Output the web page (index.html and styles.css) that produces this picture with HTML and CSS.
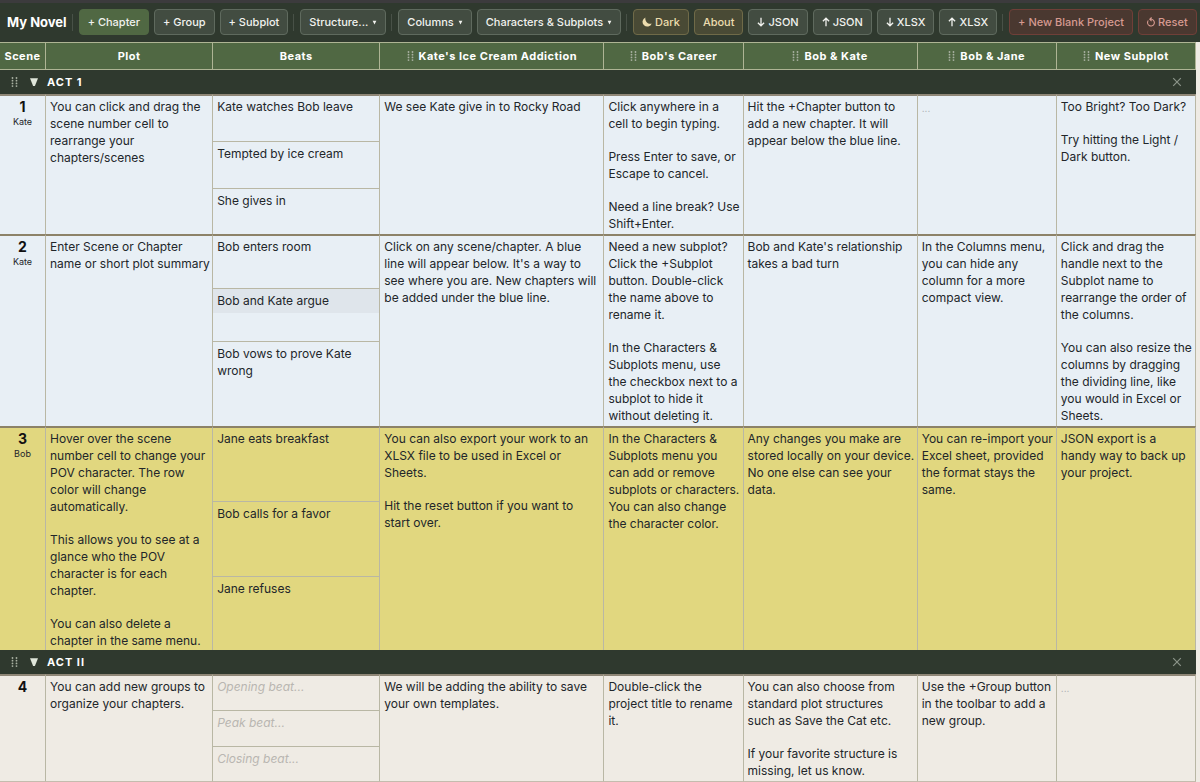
FILE: index.html
```html
<!DOCTYPE html>
<html lang="en">
  <head>
    <meta charset="UTF-8">
    <title>My Novel</title>
    <meta name="viewport" content="width=device-width, initial-scale=1.0">
    <link rel="stylesheet" href="styles.css">
  </head>
  <body>
    <!-- Shared icons -->
    <svg class="defs" width="0" height="0" aria-hidden="true">
      <symbol id="grip" viewBox="0 0 7 10">
        <circle cx="1.5" cy="1" r="0.9"/><circle cx="5.5" cy="1" r="0.9"/>
        <circle cx="1.5" cy="3.7" r="0.9"/><circle cx="5.5" cy="3.7" r="0.9"/>
        <circle cx="1.5" cy="6.4" r="0.9"/><circle cx="5.5" cy="6.4" r="0.9"/>
        <circle cx="1.5" cy="9.1" r="0.9"/><circle cx="5.5" cy="9.1" r="0.9"/>
      </symbol>
      <symbol id="caret" viewBox="0 0 5 5">
        <path d="M0.6 0.8h3.8L2.5 4.6z" fill="currentColor"/>
      </symbol>
      <symbol id="arrow-down" viewBox="0 0 8 10">
        <path d="M4 0.8v8M0.9 5.7L4 8.8l3.1-3.1" fill="none" stroke="currentColor" stroke-width="1.3"/>
      </symbol>
      <symbol id="arrow-up" viewBox="0 0 8 10">
        <path d="M4 9.2v-8M0.9 4.3L4 1.2l3.1 3.1" fill="none" stroke="currentColor" stroke-width="1.3"/>
      </symbol>
      <symbol id="close" viewBox="0 0 10 10">
        <path d="M1.2 1.2l7.6 7.6M8.8 1.2L1.2 8.8" fill="none" stroke="currentColor" stroke-width="1.2"/>
      </symbol>
    </svg>

    <header class="toolbar">
      <h1 class="project-title">My Novel</h1>
      <span class="sep"></span>
      <button type="button" class="btn primary">+ Chapter</button>
      <button type="button" class="btn">+ Group</button>
      <button type="button" class="btn">+ Subplot</button>
      <span class="sep"></span>
      <button type="button" class="btn" aria-haspopup="true">Structure... <svg class="caret"><use href="#caret"/></svg></button>
      <span class="sep"></span>
      <button type="button" class="btn" aria-haspopup="true">Columns <svg class="caret"><use href="#caret"/></svg></button>
      <button type="button" class="btn" aria-haspopup="true">Characters &amp; Subplots <svg class="caret"><use href="#caret"/></svg></button>
      <span class="sep"></span>
      <button type="button" class="btn icon-btn gold"><svg class="icon" viewBox="0 0 10 10"><path d="M3.4 0.4A4.8 4.8 0 1 0 9.8 6.6C6.2 7.8 2.6 4.6 3.4 0.4z" fill="currentColor"/></svg>Dark</button>
      <button type="button" class="btn gold">About</button>
      <button type="button" class="btn icon-btn"><svg class="arrow"><use href="#arrow-down"/></svg>JSON</button>
      <button type="button" class="btn icon-btn"><svg class="arrow"><use href="#arrow-up"/></svg>JSON</button>
      <button type="button" class="btn icon-btn"><svg class="arrow"><use href="#arrow-down"/></svg>XLSX</button>
      <button type="button" class="btn icon-btn"><svg class="arrow"><use href="#arrow-up"/></svg>XLSX</button>
      <span class="sep"></span>
      <button type="button" class="btn danger">+ New Blank Project</button>
      <button type="button" class="btn icon-btn danger"><svg class="arrow" viewBox="0 0 8 10"><path d="M1.3 3.5A3.4 3.4 0 1 0 4.6 2.3H3.2M4.6 0.5L2.8 2.3l1.8 1.8" fill="none" stroke="currentColor" stroke-width="1.1"/></svg>Reset</button>
    </header>

    <main class="board">
      <table class="plot-table">
        <colgroup>
          <col class="col-scene">
          <col class="col-plot">
          <col class="col-beats">
          <col class="col-wide">
          <col class="col-narrow">
          <col class="col-medium">
          <col class="col-narrow">
          <col class="col-narrow">
        </colgroup>
        <thead>
          <tr>
            <th scope="col">Scene</th>
            <th scope="col">Plot</th>
            <th scope="col">Beats</th>
            <th scope="col"><svg class="grip"><use href="#grip"/></svg>Kate's Ice Cream Addiction</th>
            <th scope="col"><svg class="grip"><use href="#grip"/></svg>Bob's Career</th>
            <th scope="col"><svg class="grip"><use href="#grip"/></svg>Bob &amp; Kate</th>
            <th scope="col"><svg class="grip"><use href="#grip"/></svg>Bob &amp; Jane</th>
            <th scope="col"><svg class="grip"><use href="#grip"/></svg>New Subplot</th>
          </tr>
        </thead>
        <tbody>
          <tr class="group">
            <td colspan="8">
              <div class="group-bar">
                <svg class="grip"><use href="#grip"/></svg>
                <button type="button" class="toggle" aria-label="Collapse group"><svg viewBox="0 0 8 8"><path d="M0 0.3h8L4.9 8H3.1z" fill="currentColor"/></svg></button>
                <span class="group-name">ACT 1</span>
                <button type="button" class="remove" aria-label="Delete group"><svg><use href="#close"/></svg></button>
              </div>
            </td>
          </tr>
          <tr class="scene kate">
            <td class="num"><b>1</b><small>Kate</small></td>
            <td><p>You can click and drag the scene number cell to rearrange your chapters/scenes</p></td>
            <td class="beats">
              <div class="beat-list">
                <div class="beat"><p>Kate watches Bob leave</p></div>
                <div class="beat"><p>Tempted by ice cream</p></div>
                <div class="beat"><p>She gives in</p></div>
              </div>
            </td>
            <td class="wide"><p>We see Kate give in to Rocky Road</p></td>
            <td>
              <p>Click anywhere in a cell to begin typing.</p>
              <p>Press Enter to save, or Escape to cancel.</p>
              <p>Need a line break? Use Shift+Enter.</p>
            </td>
            <td><p>Hit the +Chapter button to add a new chapter. It will appear below the blue line.</p></td>
            <td><p class="empty">...</p></td>
            <td>
              <p>Too Bright? Too Dark?</p>
              <p>Try hitting the Light / Dark button.</p>
            </td>
          </tr>
          <tr class="scene kate">
            <td class="num"><b>2</b><small>Kate</small></td>
            <td><p>Enter Scene or Chapter name or short plot summary</p></td>
            <td class="beats">
              <div class="beat-list">
                <div class="beat"><p>Bob enters room</p></div>
                <div class="beat"><p class="hover">Bob and Kate argue</p></div>
                <div class="beat tall"><p>Bob vows to prove Kate wrong</p></div>
              </div>
            </td>
            <td class="wide"><p>Click on any scene/chapter. A blue line will appear below. It's a way to see where you are. New chapters will be added under the blue line.</p></td>
            <td>
              <p>Need a new subplot? Click the +Subplot button. Double-click the name above to rename it.</p>
              <p>In the Characters &amp; Subplots menu, use the checkbox next to a subplot to hide it without deleting it.</p>
            </td>
            <td><p>Bob and Kate's relationship takes a bad turn</p></td>
            <td><p>In the Columns menu, you can hide any column for a more compact view.</p></td>
            <td>
              <p>Click and drag the handle next to the Subplot name to rearrange the order of the columns.</p>
              <p>You can also resize the columns by dragging the dividing line, like you would in Excel or Sheets.</p>
            </td>
          </tr>
          <tr class="scene bob">
            <td class="num"><b>3</b><small>Bob</small></td>
            <td>
              <p>Hover over the scene number cell to change your POV character. The row color will change automatically.</p>
              <p>This allows you to see at a glance who the POV character is for each chapter.</p>
              <p>You can also delete a chapter in the same menu.</p>
            </td>
            <td class="beats">
              <div class="beat-list">
                <div class="beat"><p>Jane eats breakfast</p></div>
                <div class="beat"><p>Bob calls for a favor</p></div>
                <div class="beat"><p>Jane refuses</p></div>
              </div>
            </td>
            <td class="wide">
              <p>You can also export your work to an XLSX file to be used in Excel or Sheets.</p>
              <p>Hit the reset button if you want to start over.</p>
            </td>
            <td><p>In the Characters &amp; Subplots menu you can add or remove subplots or characters. You can also change the character color.</p></td>
            <td><p>Any changes you make are stored locally on your device. No one else can see your data.</p></td>
            <td><p>You can re-import your Excel sheet, provided the format stays the same.</p></td>
            <td><p>JSON export is a handy way to back up your project.</p></td>
          </tr>
        </tbody>
        <tbody>
          <tr class="group">
            <td colspan="8">
              <div class="group-bar">
                <svg class="grip"><use href="#grip"/></svg>
                <button type="button" class="toggle" aria-label="Collapse group"><svg viewBox="0 0 8 8"><path d="M0 0.3h8L4.9 8H3.1z" fill="currentColor"/></svg></button>
                <span class="group-name">ACT II</span>
                <button type="button" class="remove" aria-label="Delete group"><svg><use href="#close"/></svg></button>
              </div>
            </td>
          </tr>
          <tr class="scene">
            <td class="num"><b>4</b></td>
            <td><p>You can add new groups to organize your chapters.</p></td>
            <td class="beats">
              <div class="beat-list">
                <div class="beat"><p class="hint">Opening beat...</p></div>
                <div class="beat"><p class="hint">Peak beat...</p></div>
                <div class="beat"><p class="hint">Closing beat...</p></div>
              </div>
            </td>
            <td class="wide"><p>We will be adding the ability to save your own templates.</p></td>
            <td><p>Double-click the project title to rename it.</p></td>
            <td>
              <p>You can also choose from standard plot structures such&nbsp;as Save the Cat etc.</p>
              <p>If your favorite structure is missing, let us know.</p>
            </td>
            <td><p>Use the +Group button in the toolbar to add a new group.</p></td>
            <td><p class="empty">...</p></td>
          </tr>
        </tbody>
      </table>
    </main>
  </body>
</html>
```
FILE: styles.css
```css
* {
  box-sizing: border-box;
}
body {
  margin: 0;
  font-family: Inter, "Liberation Sans", sans-serif;
  font-size: 12px;
  line-height: 17px;
  color: #22262a;
  background-color: #efebe4;
}
button {
  font: inherit;
  cursor: pointer;
}
.defs {
  display: block;
}

/* Toolbar */
.toolbar {
  display: flex;
  align-items: center;
  gap: 5px;
  padding: 6px 2px 7px 7px;
  border-top: 3px solid #3c3b3d;
  background-color: #2f392e;
  white-space: nowrap;
}
.project-title {
  margin: 0;
  font-size: 13px;
  font-weight: 700;
  color: #ffffff;
}
.sep {
  width: 1px;
  height: 17px;
  margin-right: 1px;
  background-color: #485147;
}
.btn {
  display: flex;
  align-items: center;
  gap: 4px;
  height: 26px;
  padding: 0 8px;
  border: 1px solid #5f6a5e;
  border-radius: 4px;
  background-color: #424c41;
  color: #f1f2ee;
  font-size: 11px;
  font-weight: 500;
}
.btn.icon-btn {
  gap: 3px;
}
.btn.primary {
  background-color: #506843;
  border-color: #506843;
}
.btn.gold {
  background-color: #494a35;
  border-color: #6f6a48;
  color: #ecdcae;
}
.btn.danger {
  background-color: #4a3830;
  border-color: #6f3f38;
  color: #d69a90;
}
.caret {
  width: 5px;
  height: 5px;
}
.arrow {
  width: 8px;
  height: 10px;
}
.icon {
  width: 10px;
  height: 10px;
}

/* Table */
.board {
  padding-right: 4px;
}
.plot-table {
  width: 100%;
  table-layout: fixed;
  border-collapse: separate;
  border-spacing: 0;
}
.col-scene {
  width: 46px;
}
.col-plot,
.col-beats {
  width: 167px;
}
.col-wide {
  width: 224px;
}
.col-narrow {
  width: 139px;
}
.col-medium {
  width: 174px;
}
th {
  height: 28px;
  padding: 0;
  border: solid #aeb494;
  border-width: 1px 1px 1px 0;
  background-color: #506843;
  color: #ffffff;
  font-size: 11px;
  font-weight: 700;
  letter-spacing: 0.5px;
  white-space: nowrap;
}
.grip {
  width: 7px;
  height: 10px;
  fill: #a9b1a2;
}
th .grip {
  margin-right: 5px;
  vertical-align: -1px;
}

.group td {
  padding: 0;
  background-color: #2f392e;
}
.group-bar {
  display: flex;
  align-items: center;
  height: 24px;
  padding: 0 14px 0 11px;
}
.toggle,
.remove {
  display: flex;
  padding: 0;
  border: 0;
  background: none;
}
.toggle {
  margin: 0 9px 0 12px;
  color: #dfe6da;
}
.toggle svg {
  width: 8px;
  height: 8px;
}
.remove {
  margin-left: auto;
  color: #8b9489;
}
.remove svg {
  width: 10px;
  height: 10px;
}
.group-name {
  font-size: 11px;
  font-weight: 700;
  letter-spacing: 1px;
  color: #ffffff;
}

.scene td {
  height: 108px;
  padding: 2px 1px 1px 4px;
  border-top: 2px solid #8c8268;
  border-right: 1px solid #b9b7a4;
  vertical-align: top;
}
.scene .wide {
  padding-right: 5px;
}
.group + .scene td {
  border-top-color: #8f8777;
}
tbody:last-child .scene:last-child td {
  border-bottom: 1px solid #c4bcae;
}
.kate td {
  padding-bottom: 2px;
  background-color: #e8eff5;
}
.bob td {
  background-color: #e1d77f;
}
.scene p {
  margin: 0;
}
.scene p + p {
  margin-top: 16px;
}
.scene .num {
  padding: 2px 0 0;
  text-align: center;
}
.num b,
.num small {
  display: block;
}
.num b {
  font-size: 14px;
  line-height: 18px;
  color: #111111;
}
.num small {
  font-size: 9px;
  line-height: 11px;
}
.scene .beats {
  padding: 0;
}
.beat-list {
  display: flex;
  flex-direction: column;
  height: 100%;
}
.beat {
  flex: 5 1 0;
}
.beat.tall {
  flex-grow: 8;
}
.beat + .beat {
  border-top: 1px solid #b9b7a4;
}
.beat p {
  padding: 2px 4px 4px;
}
.beat + .beat p {
  padding-top: 3px;
}
.beat .hover {
  background-color: #dfe5eb;
}
.beat .hint {
  font-style: italic;
  color: #b9b6b1;
}
.scene .empty {
  font-size: 10px;
  line-height: 20px;
  color: #a9aeb2;
}
```
